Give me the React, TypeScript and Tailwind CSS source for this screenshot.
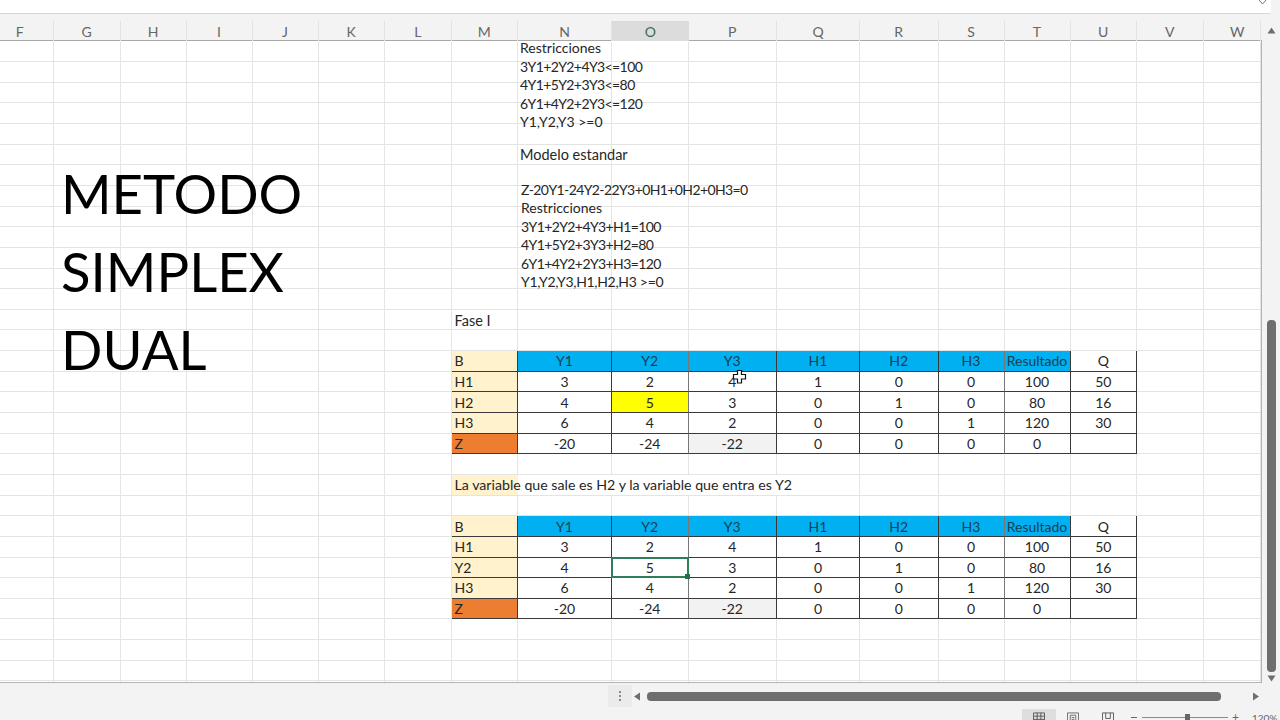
const COLS = ['F', 'G', 'H', 'I', 'J', 'K', 'L', 'M', 'N', 'O', 'P', 'Q', 'R', 'S', 'T', 'U', 'V', 'W'];

const GRID_COLS =
  'grid-cols-[53.5px_67px_66px_66px_66px_66.5px_66.5px_66.5px_94px_76.5px_88.5px_83px_78.5px_66px_66px_66.5px_66.5px_57.5px]';

const HEADER = ['B', 'Y1', 'Y2', 'Y3', 'H1', 'H2', 'H3', 'Resultado', 'Q'];
const TABLE_ONE = [
  HEADER,
  ['H1', '3', '2', '4', '1', '0', '0', '100', '50'],
  ['H2', '4', '5', '3', '0', '1', '0', '80', '16'],
  ['H3', '6', '4', '2', '0', '0', '1', '120', '30'],
  ['Z', '-20', '-24', '-22', '0', '0', '0', '0', ''],
];
const TABLE_TWO = [
  HEADER,
  ['H1', '3', '2', '4', '1', '0', '0', '100', '50'],
  ['Y2', '4', '5', '3', '0', '1', '0', '80', '16'],
  ['H3', '6', '4', '2', '0', '0', '1', '120', '30'],
  ['Z', '-20', '-24', '-22', '0', '0', '0', '0', ''],
];

function tableCellClass(r: number, c: number, pivot: 'fill' | 'select') {
  let bg = 'bg-white';
  if (c === 0) bg = r === 4 ? 'bg-[#ed7d31]' : 'bg-[#fff2cc]';
  else if (r === 0 && c < 8) bg = 'bg-[#00b0f0]';
  else if (r === 4 && c === 3) bg = 'bg-[#f2f2f2]';
  else if (r === 2 && c === 2 && pivot === 'fill') bg = 'bg-[#ffff00]';

  const align = c === 0 ? 'justify-start pl-[3px]' : 'justify-center';
  const top = r === 0 ? '-mt-px border-t' : '';
  const left = c === 0 ? '-ml-px border-l' : '';
  const right = c === 2 || c === 6 ? 'border-r-[#777777]' : 'border-r-[#3a3a3a]';
  const color = r === 0 && c > 0 && c < 8 ? 'text-[#173f52]' : 'text-[#262626]';
  return `flex items-center pt-px border-r border-b border-[#3a3a3a] ${right} ${top} ${left} ${bg} ${align} ${color}`;
}

function SimplexTable({ rows, rowClass, pivot }: { rows: string[][]; rowClass: string; pivot: 'fill' | 'select' }) {
  return (
    <div className={`${rowClass} col-start-8 col-span-9 row-span-5 grid grid-cols-subgrid grid-rows-subgrid text-[14px]`}>
      {rows.map((row, r) =>
        row.map((value, c) => {
          if (pivot === 'select' && r === 2 && c === 2) {
            return (
              <div key={c} className="relative -mt-px -ml-px flex items-center justify-center border-2 border-[#2f7d5a] bg-white pt-px text-[#262626]">
                {value}
                <div className="absolute -right-[3px] -bottom-[3px] h-[5px] w-[5px] bg-[#217346]" />
              </div>
            );
          }
          return (
            <div key={`${r}-${c}`} className={tableCellClass(r, c, pivot)}>
              {value}
            </div>
          );
        }),
      )}
    </div>
  );
}

function ColumnHeaders() {
  return (
    <div className={`grid ${GRID_COLS} h-[26.5px] w-[1261.5px] border-b border-[#a8a8a8] bg-[#f3f3f3]`}>
      {COLS.map((col) => {
        let pad = '';
        if (col === 'F') pad = 'pr-[13px]';
        if (col === 'W') pad = 'pl-[11px]';
        return (
          <div
            key={col}
            className={
              col === 'O'
                ? 'mt-[6.5px] flex items-center justify-center border-b-2 border-[#217346] bg-[#dcdcdc] pb-[5px] text-[#3d6b52]'
                : `mt-[6.5px] flex items-center justify-center border-r border-[#e2e2e2] pb-[6px] text-[#666666] ${pad}`
            }
          >
            {col}
          </div>
        );
      })}
    </div>
  );
}

function Sheet() {
  const blanks = Array.from({ length: 18 * 32 });
  return (
    <div className="relative h-[642px] w-[1261.5px] overflow-hidden border-r border-b border-[#b4b4b4] bg-white text-[14.5px] leading-none">
      <div className={`mt-px grid ${GRID_COLS} auto-rows-[20.65px]`}>
        <div className="col-start-8 row-start-14 flex items-center whitespace-nowrap border-r border-b border-[#e4e4e4] pl-[3px] pt-[4px] text-[#262626]">
          Fase I
        </div>
        <div className="relative z-10 col-start-8 row-start-22 flex items-center whitespace-nowrap border-b border-[#e4e4e4] bg-[#fff2cc] pl-[3px] text-[14.2px] text-[#262626]">
          La variable que sale es H2 y la variable que entra es Y2
        </div>
        <div className="col-start-9 col-span-4 row-start-22 border-r border-b border-[#e4e4e4] bg-white" />
        <SimplexTable rows={TABLE_ONE} rowClass="row-start-16" pivot="fill" />
        <SimplexTable rows={TABLE_TWO} rowClass="row-start-24" pivot="select" />
        {blanks.map((_, i) => (
          <div key={i} className="border-r border-b border-[#e4e4e4]" />
        ))}
      </div>

      {/* pasted text boxes, they don't follow the rows */}
      <div className="absolute left-[61px] top-[113px] flex flex-col font-normal text-[54.5px] leading-[78px] text-black">
        <span>METODO</span>
        <span>SIMPLEX</span>
        <span>DUAL</span>
      </div>
      <div className="absolute left-[520px] top-[-1.5px] z-20 flex flex-col text-[14px] leading-[18.5px] text-[#262626]">
        <span>Restricciones</span>
        <span className="tracking-[-0.6px]">3Y1+2Y2+4Y3&lt;=100</span>
        <span className="tracking-[-0.6px]">4Y1+5Y2+3Y3&lt;=80</span>
        <span className="tracking-[-0.6px]">6Y1+4Y2+2Y3&lt;=120</span>
        <span>Y1,Y2,Y3 &gt;=0</span>
        <span className="mt-[14px] text-[14.5px]">Modelo estandar</span>
        <span className="ml-px mt-[16.5px] tracking-[-0.6px]">Z-20Y1-24Y2-22Y3+0H1+0H2+0H3=0</span>
        <span className="ml-px">Restricciones</span>
        <span className="ml-px tracking-[-0.6px]">3Y1+2Y2+4Y3+H1=100</span>
        <span className="ml-px tracking-[-0.6px]">4Y1+5Y2+3Y3+H2=80</span>
        <span className="ml-px tracking-[-0.6px]">6Y1+4Y2+2Y3+H3=120</span>
        <span className="ml-px tracking-[-0.3px]">Y1,Y2,Y3,H1,H2,H3 &gt;=0</span>
      </div>

      {/* mouse cursor */}
      <svg className="absolute left-[732px] top-[328px] z-20" width="16" height="16" viewBox="0 0 16 16">
        <path d="M5.5 1.5h4v4h4v4.5h-4v4h-4v-4h-4V5.500h4z" fill="#fff" stroke="#111" strokeWidth="1.2" />
      </svg>
    </div>
  );
}

function VerticalScrollbar() {
  return (
    <div className="flex w-[18.5px] flex-col items-center pl-[5px] pr-[4px]">
      <svg className="mt-[13px] shrink-0" width="9" height="7" viewBox="0 0 9 7">
        <path d="M4.500 0.500 8.500 6.500H0.500z" fill="#6e6e6e" />
      </svg>
      <div className="mt-[286px] h-[352px] w-[9px] shrink-0 rounded-[4px] bg-[#6e6e6e]" />
      <svg className="mt-[3px] shrink-0" width="9" height="7" viewBox="0 0 9 7">
        <path d="M0.500 0.500H8.500L4.500 6.500z" fill="#6e6e6e" />
      </svg>
    </div>
  );
}

function HorizontalScrollbar() {
  return (
    <div className="mt-[2px] flex h-[22px] shrink-0 items-center pl-[608px]">
      <div className="flex h-[22px] w-[24px] items-center justify-center bg-[#ebebeb]">
        <div className="flex flex-col gap-[2px]">
          <div className="h-[2px] w-[2px] bg-[#8a8a8a]" />
          <div className="h-[2px] w-[2px] bg-[#8a8a8a]" />
          <div className="h-[2px] w-[2px] bg-[#8a8a8a]" />
        </div>
      </div>
      <svg className="ml-[1px]" width="8" height="9" viewBox="0 0 8 9">
        <path d="M7 0.500V8.500L1 4.500z" fill="#6e6e6e" />
      </svg>
      <div className="ml-[6px] h-[9px] w-[574px] rounded-[4px] bg-[#6e6e6e]" />
      <svg className="ml-[31px]" width="8" height="9" viewBox="0 0 8 9">
        <path d="M1 0.500V8.500L7 4.500z" fill="#6e6e6e" />
      </svg>
    </div>
  );
}

function StatusBar() {
  return (
    <div className="flex h-[13px] shrink-0 items-start overflow-hidden pl-[1022px] text-[#666666]">
      <div className="mt-[2px] flex h-[11px] w-[34px] shrink-0 items-start justify-center bg-[#dedede] pt-[3px]">
        <svg className="shrink-0" width="12" height="12" viewBox="0 0 13 12" fill="none" stroke="#555" strokeWidth="1">
          <path d="M.5.500h12v11H.5zM.5 4h12M.5 7.500h12M4.500.500v11M8.500.500v11" />
        </svg>
      </div>
      <svg className="ml-[11px] mt-[5px] shrink-0" width="12" height="12" viewBox="0 0 13 12" fill="none" stroke="#666" strokeWidth="1">
        <path d="M.5.500h12v11H.5zM3.500 3h6v9h-6zM5 5.500h3M5 7.500h3" />
      </svg>
      <svg className="ml-[23px] mt-[5px] shrink-0" width="12" height="12" viewBox="0 0 13 12" fill="none" stroke="#555" strokeWidth="1">
        <path d="M.5 12V.500h12V12M4 .500v6h5v-6M.5 9h12" />
      </svg>
      <div className="ml-[17px] mt-[10px] h-[1px] w-[6px] shrink-0 bg-[#666666]" />
      <div className="relative ml-[5px] mt-[10px] h-[1px] w-[86px] shrink-0 bg-[#8a8a8a]">
        <div className="absolute left-[43px] top-[-3px] h-[8px] w-[5px] bg-[#666666]" />
      </div>
      <div className="ml-[4px] mt-[4px] text-[12px] leading-none">+</div>
      <div className="ml-[13px] mt-[6px] whitespace-nowrap text-[10px] leading-none">120%</div>
    </div>
  );
}

export default function App() {
  return (
    <div className="flex h-[720px] w-[1280px] flex-col overflow-hidden bg-[#f3f3f3] font-['Lato',sans-serif]">
      <div className="flex h-[14px] shrink-0">
        <div className="flex w-[1271px] justify-end rounded-br-[3px] border-b border-[#d6d6d6] bg-white pr-[4px]">
          <svg width="9" height="6" viewBox="0 0 9 6" fill="none" stroke="#777" strokeWidth="1">
            <path d="M1 0l3.500 4L8 0" />
          </svg>
        </div>
      </div>
      <div className="flex h-[669px] shrink-0">
        <div className="flex flex-col text-[14px]">
          <ColumnHeaders />
          <Sheet />
        </div>
        <VerticalScrollbar />
      </div>
      <HorizontalScrollbar />
      <StatusBar />
    </div>
  );
}
